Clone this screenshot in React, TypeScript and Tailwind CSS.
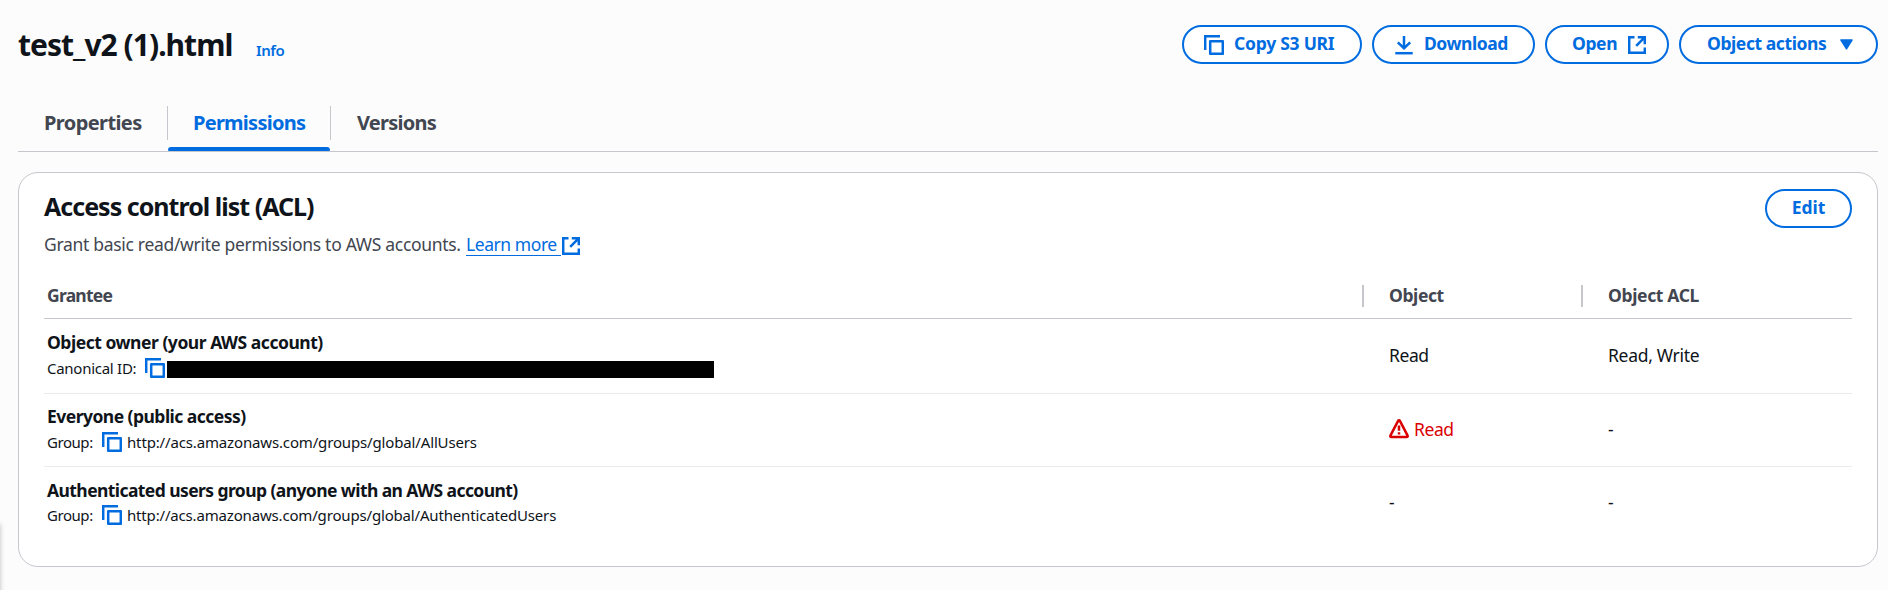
import React from "react";

function CopyIcon({ className = "" }: { className?: string }) {
  return (
    <svg width="20" height="20" viewBox="0 0 20 20" fill="none" stroke="currentColor" strokeWidth="2.5" className={`shrink-0 ${className}`}>
      <path d="M1.2 15V1.2H16" />
      <path d="M6.2 6.2h12.6v12.6H6.2z" strokeLinejoin="round" />
    </svg>
  );
}

function DownloadIcon() {
  return (
    <svg width="18" height="20" viewBox="0 0 18 20" fill="none" stroke="currentColor" strokeWidth="2.5" className="shrink-0">
      <path d="M9 1v12M2.8 7.3L9 13.2l6.2-5.9" />
      <path d="M0.3 18.2h17.4" />
    </svg>
  );
}

function ExternalIcon() {
  return (
    <svg width="18" height="18" viewBox="0 0 18 18" fill="none" stroke="currentColor" strokeWidth="2.5" className="shrink-0">
      <path d="M6.5 1.2H1.2v15.6h15.6v-5.2" />
      <path d="M9.8 1.2h7v7M16.6 1.4L8.2 9.8" />
    </svg>
  );
}

function WarningIcon() {
  return (
    <svg width="20" height="20" viewBox="0 0 20 20" fill="none" stroke="currentColor" strokeWidth="2.5" strokeLinejoin="round" className="shrink-0">
      <path d="M9.1 1.9a1 1 0 0 1 1.8 0l7.7 14.7a1 1 0 0 1-.9 1.5H2.3a1 1 0 0 1-.9-1.5z" />
      <path d="M10 6.5v5.2M10 13.2v2.2" />
    </svg>
  );
}

function Button({ className = "", children }: { className?: string; children: React.ReactNode }) {
  return (
    <button className={`flex h-[39px] items-center whitespace-nowrap rounded-full border-2 border-[#006ce0] bg-white text-left text-[17.5px] leading-[22px] font-bold text-[#006ce0] ${className}`}>
      {children}
    </button>
  );
}

function Dash() {
  return <span>-</span>;
}

const rows = [
  {
    title: "Object owner (your AWS account)",
    titleStyle: "tracking-[-0.47px]",
    label: "Canonical ID:",
    labelStyle: "w-[98px] tracking-[-0.27px]",
    value: null,
    valueStyle: "",
    object: <span className="tracking-[-0.4px]">Read</span>,
    acl: <span className="tracking-[-0.3px]">Read, Write</span>,
    height: "h-[75px]",
    border: "border-b",
  },
  {
    title: "Everyone (public access)",
    titleStyle: "tracking-[-0.53px]",
    label: "Group:",
    labelStyle: "w-[55px] tracking-[-0.45px]",
    value: "http://acs.amazonaws.com/groups/global/AllUsers",
    valueStyle: "tracking-[-0.15px]",
    object: (
      <span className="flex items-center gap-[5px] text-[#db0000]">
        <WarningIcon />
        <span className="tracking-[-0.4px]">Read</span>
      </span>
    ),
    acl: <Dash />,
    height: "h-[73px]",
    border: "border-b",
  },
  {
    title: "Authenticated users group (anyone with an AWS account)",
    titleStyle: "tracking-[-0.58px]",
    label: "Group:",
    labelStyle: "w-[55px] tracking-[-0.45px]",
    value: "http://acs.amazonaws.com/groups/global/AuthenticatedUsers",
    valueStyle: "tracking-[-0.17px]",
    object: <Dash />,
    acl: <Dash />,
    height: "h-[73px]",
    border: "",
  },
];

export default function App() {
  return (
    <div className="relative h-[590px] w-full overflow-hidden bg-[#fcfcfc] pr-[10px] pl-[18px] font-['Noto_Sans',sans-serif] text-[#0f141a]">
      <div className="absolute top-[524px] -left-2 h-[90px] w-2 shadow-[0_0_5px_rgba(0,0,0,0.25)]" />
      <header className="flex items-center justify-between pt-[25px]">
        <div className="flex items-start whitespace-nowrap">
          <h1 className="w-[238px] text-[30px] leading-[36px] font-bold tracking-[-0.98px]">test_v2 (1).html</h1>
          <a className="mt-[13px] text-[15px] leading-[20px] font-semibold tracking-[-0.4px] text-[#006ce0]">Info</a>
        </div>
        <div className="flex gap-[10px]">
          <Button className="w-[180px] pl-[20px]">
            <CopyIcon />
            <span className="ml-[10px] pb-[3px] tracking-[-0.25px]">Copy S3 URI</span>
          </Button>
          <Button className="w-[163px] pl-[21px]">
            <DownloadIcon />
            <span className="ml-[11px] pb-[3px] tracking-[-0.45px]">Download</span>
          </Button>
          <Button className="w-[124px] pl-[25px]">
            <span className="w-[56px] pb-[3px] tracking-[-0.4px]">Open</span>
            <ExternalIcon />
          </Button>
          <Button className="w-[199px] pl-[26px]">
            <span className="w-[133px] pb-[3px] tracking-[-0.42px]">Object actions</span>
            <svg width="13" height="11" viewBox="0 0 13 11" fill="currentColor" stroke="currentColor" strokeWidth="1.5" strokeLinejoin="round">
              <path d="M1 1h11L6.5 9.8z" />
            </svg>
          </Button>
        </div>
      </header>

      <nav className="mt-[42px] flex h-[46px] border-b border-[#c6c6cd] text-[20px] leading-[34px] font-bold text-[#424650]">
        <div className="h-[34px] w-[150px] border-r border-[#c6c6cd] pl-[26px] tracking-[-0.6px]">Properties</div>
        <div className="flex w-[162px] flex-col justify-between">
          <span className="pl-[25px] tracking-[-0.74px] text-[#006ce0]">Permissions</span>
          <div className="h-[4px] rounded-t-[3px] rounded-b-[1px] bg-[#006ce0]" />
        </div>
        <div className="h-[34px] border-l border-[#c6c6cd] pl-[26px] tracking-[-0.75px]">Versions</div>
      </nav>

      <section className="mt-[20px] h-[395px] rounded-[20px] border border-[#c6c6cd] bg-white px-[25px] pt-[16px]">
        <div className="flex h-[39px] items-start justify-between">
          <h2 className="text-[25px] leading-[35px] font-bold tracking-[-0.98px]">Access control list (ACL)</h2>
          <Button className="w-[87px] justify-center">
            <span className="pb-[3px] tracking-[-0.1px]">Edit</span>
          </Button>
        </div>
        <div className="mt-[4px] flex h-[24px] items-start text-[17.5px] leading-[24px] whitespace-nowrap text-[#424650]">
          <p className="w-[422px] tracking-[-0.31px]">Grant basic read/write permissions to AWS accounts.</p>
          <a className="mr-px h-[24px] w-[95px] border-b border-[#006ce0] tracking-[-0.44px] text-[#006ce0]">Learn more</a>
          <span className="mt-[5px] text-[#006ce0]">
            <ExternalIcon />
          </span>
        </div>

        <div className="mt-[22px] grid h-[41px] grid-cols-[1318px_219px_1fr] items-center border-b border-[#c6c6cd] pb-[5px] text-[17.5px] leading-[22px] font-bold text-[#424650]">
          <div className="pb-[2px] pl-[3px] tracking-[-0.75px]">Grantee</div>
          <div className="border-l-2 border-[#c6c6cd] pl-[25px]">
            <div className="-mt-px mb-px tracking-[-0.4px]">Object</div>
          </div>
          <div className="border-l-2 border-[#c6c6cd] pl-[25px]">
            <div className="-mt-px mb-px tracking-[-0.35px]">Object ACL</div>
          </div>
        </div>

        {rows.map((row) => (
          <div key={row.title} className={`grid grid-cols-[1318px_219px_1fr] items-center border-[#ebebf0] pb-[3px] text-[17.5px] leading-[24px] ${row.height} ${row.border}`}>
            <div className="pl-[3px] whitespace-nowrap">
              <div className={`leading-[26px] font-bold ${row.titleStyle}`}>{row.title}</div>
              <div className="flex h-[25px] items-center text-[15px]">
                <span className={row.labelStyle}>{row.label}</span>
                <CopyIcon className="text-[#006ce0]" />
                {row.value ? (
                  <span className={`ml-[5px] ${row.valueStyle}`}>{row.value}</span>
                ) : (
                  <span className="mt-[4px] ml-[2px] h-[17px] w-[547px] bg-black" />
                )}
              </div>
            </div>
            <div className="pl-[27px]">{row.object}</div>
            <div className="pl-[27px]">{row.acl}</div>
          </div>
        ))}
      </section>
    </div>
  );
}
